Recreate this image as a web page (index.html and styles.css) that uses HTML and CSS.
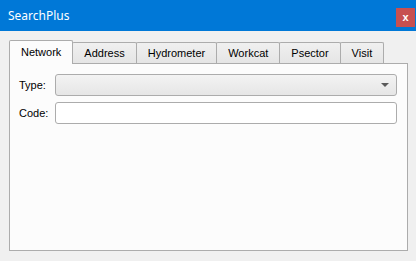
FILE: index.html
```html
<!DOCTYPE html>
<html lang="en">
<head>
  <meta charset="UTF-8" />
  <title>SearchPlus</title>
  <link rel="stylesheet" href="styles.css">
</head>
<body>

  <div class="titlebar">
    <span class="title">SearchPlus</span>
    <div class="close">x</div>
  </div>

  <div class="content">
    <div class="tabs">
      <div class="tab active">Network</div>
      <div class="tab">Address</div>
      <div class="tab">Hydrometer</div>
      <div class="tab">Workcat</div>
      <div class="tab">Psector</div>
      <div class="tab">Visit</div>
    </div>

    <div class="panel">
      <div class="form">
        <label>Type:</label>
        <div class="combo"><span class="arrow"></span></div>
        <label>Code:</label>
        <div class="edit"></div>
      </div>
    </div>
  </div>

</body>
</html>
```

FILE: styles.css
```css
body {
  font-family: "Liberation Sans", Arial, sans-serif;
  font-size: 11px;
  background-color: #f0f0f0;
  margin: 0; padding: 0;
  color: #000;
}
.titlebar {
  height: 31px;
  background: #0078d7;
  display: flex;
  align-items: center;
  padding-left: 8px;
}
.title {
  color: #fff;
  font-family: "Noto Sans", sans-serif;
  font-size: 12px;
  margin-top: -1px;
}
.close {
  margin-left: auto;
  margin-right: 1px;
  align-self: flex-start;
  margin-top: 8px;
  width: 19px;
  height: 19px;
  background: #c75050;
  color: #fff;
  font-weight: bold;
  font-size: 11px;
  line-height: 18px;
  text-align: center;
}
.content {
  padding: 9px 8px 0 9px;
}
.tabs {
  display: flex;
  align-items: flex-end;
  height: 23px;
}
.tab {
  box-sizing: border-box;
  height: 21px;
  line-height: 20px;
  padding: 0 11px;
  border: 1px solid #acacac;
  border-bottom: none;
  border-radius: 2px 2px 0 0;
  background: linear-gradient(#f0f0f0, #e5e5e5);
  margin-left: -1px;
}
.tab:first-child {
  margin-left: 0;
}
.tab.active {
  height: 24px;
  line-height: 22px;
  background: #fcfcfc;
  margin-bottom: -1px;
  position: relative;
  z-index: 1;
  padding: 0 11px;
}
.panel {
  box-sizing: border-box;
  height: 188px;
  border: 1px solid #acacac;
  background: #fcfcfc;
  box-shadow: 0 1px 0 #dcdcdc;
  padding: 10px 10px 0 9px;
}
.form {
  display: grid;
  grid-template-columns: 30px 1fr;
  column-gap: 6px;
  row-gap: 6px;
  align-items: center;
}
.combo {
  box-sizing: border-box;
  height: 22px;
  border: 1px solid #acacac;
  border-radius: 3px;
  background: linear-gradient(#f3f3f3, #e6e6e6);
  display: flex;
  align-items: center;
  justify-content: flex-end;
  padding-right: 7px;
}
.arrow {
  width: 0; height: 0;
  border-left: 4px solid transparent;
  border-right: 4px solid transparent;
  border-top: 4px solid #5a5a5a;
}
.edit {
  box-sizing: border-box;
  height: 22px;
  border: 1px solid #acacac;
  border-radius: 3px;
  background: #fff;
}
```
